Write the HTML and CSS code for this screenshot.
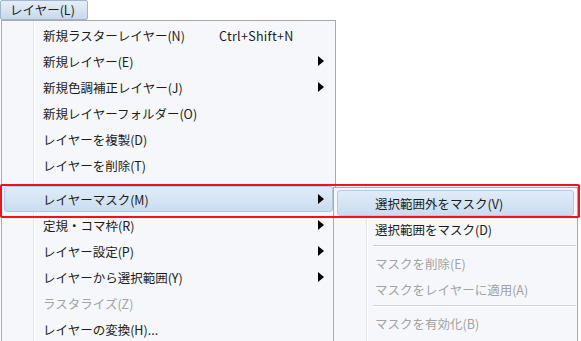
FILE: index.html
```html
<!DOCTYPE html>
<html lang="ja">
<head>
<meta charset="utf-8">
<link rel="stylesheet" href="styles.css">
</head>
<body>
<div class="page">
  <div class="menubar">
    <div class="menubar-item">レイヤー(L)</div>
  </div>
  <div class="menu main-menu">
    <div class="item"><span class="label">新規ラスターレイヤー(N)</span><span class="shortcut">Ctrl+Shift+N</span></div>
    <div class="item"><span class="label">新規レイヤー(E)</span><span class="arrow"></span></div>
    <div class="item"><span class="label">新規色調補正レイヤー(J)</span><span class="arrow"></span></div>
    <div class="item"><span class="label">新規レイヤーフォルダー(O)</span></div>
    <div class="item"><span class="label">レイヤーを複製(D)</span></div>
    <div class="item"><span class="label">レイヤーを削除(T)</span></div>
    <div class="sep main-sep"></div>
    <div class="item active"><span class="label">レイヤーマスク(M)</span><span class="arrow"></span></div>
    <div class="item"><span class="label">定規・コマ枠(R)</span><span class="arrow"></span></div>
    <div class="item"><span class="label">レイヤー設定(P)</span><span class="arrow"></span></div>
    <div class="item"><span class="label">レイヤーから選択範囲(Y)</span><span class="arrow"></span></div>
    <div class="item disabled"><span class="label">ラスタライズ(Z)</span></div>
    <div class="item"><span class="label">レイヤーの変換(H)...</span></div>
  </div>
  <div class="menu sub-menu">
    <div class="item active"><span class="label">選択範囲外をマスク(V)</span></div>
    <div class="item"><span class="label">選択範囲をマスク(D)</span></div>
    <div class="sep"></div>
    <div class="item disabled"><span class="label">マスクを削除(E)</span></div>
    <div class="item disabled"><span class="label">マスクをレイヤーに適用(A)</span></div>
    <div class="sep"></div>
    <div class="item disabled"><span class="label">マスクを有効化(B)</span></div>
  </div>
  <div class="callout"></div>
</div>
</body>
</html>
```
FILE: styles.css
```css
html, body {
  margin: 0;
  padding: 0;
  background: #ffffff;
}
body {
  width: 581px;
  height: 341px;
  overflow: hidden;
  font-family: "Noto Sans CJK JP", "Noto Sans", sans-serif;
  font-size: 12.5px;
  color: #1c1c1c;
}
.page {
  position: relative;
  width: 581px;
  height: 341px;
}
.menubar {
  height: 20px;
  display: flex;
}
.menubar-item {
  box-sizing: border-box;
  width: 88px;
  height: 20px;
  padding-left: 9px;
  line-height: 18px;
  border: 1px solid #9fb6cf;
  border-radius: 2px;
  background: linear-gradient(#e6eef7, #c8d9ec);
}
.menu {
  box-sizing: border-box;
  border: 1px solid #a9a9a9;
  background-color: #f5f7fb;
}
.main-menu {
  margin-left: 1px;
  width: 335px;
  height: 330px;
  padding: 1px 2px 0 2px;
  background-image: linear-gradient(to right, transparent 31px, #e3e5e9 31px, #e3e5e9 32px, #ffffff 32px, #ffffff 33px, transparent 33px);
}
.item {
  box-sizing: border-box;
  height: 26px;
  display: flex;
  align-items: center;
  padding-left: 38px;
  padding-right: 8px;
  border: 1px solid transparent;
  border-radius: 3px;
  white-space: nowrap;
}
.main-menu .label {
  width: 176px;
}
.shortcut {
  letter-spacing: 0.3px;
}
.arrow {
  margin-left: auto;
  width: 0;
  height: 0;
  border-top: 5px solid transparent;
  border-bottom: 5px solid transparent;
  border-left: 6px solid #000;
}
.item.active {
  border-color: #aecbe6;
  background: linear-gradient(#e1ecf7, #c9ddef);
}
.item.disabled {
  color: #a3a3a3;
}
.sep {
  height: 8px;
  margin-left: 36px;
  background: linear-gradient(transparent 3px, #cfd2d6 3px, #cfd2d6 4px, #ffffff 4px, #ffffff 5px, transparent 5px);
}
.main-sep {
  background: linear-gradient(transparent 6px, #cfd2d6 6px, #cfd2d6 7px, transparent 7px);
}
.sub-menu {
  position: absolute;
  left: 333px;
  top: 187px;
  width: 245px;
  height: 160px;
  padding: 2px 3px;
  background-image: linear-gradient(to right, transparent 32px, #e3e5e9 32px, #e3e5e9 33px, #ffffff 33px, #ffffff 34px, transparent 34px);
}
.sub-menu .item {
  padding-left: 37px;
}
.sub-menu .sep {
  margin-left: 36px;
  margin-right: -2px;
}
.callout {
  position: absolute;
  left: 0;
  top: 184px;
  width: 580px;
  height: 34px;
  box-sizing: border-box;
  border: 2px solid #f0131b;
  border-radius: 2px;
}
```
